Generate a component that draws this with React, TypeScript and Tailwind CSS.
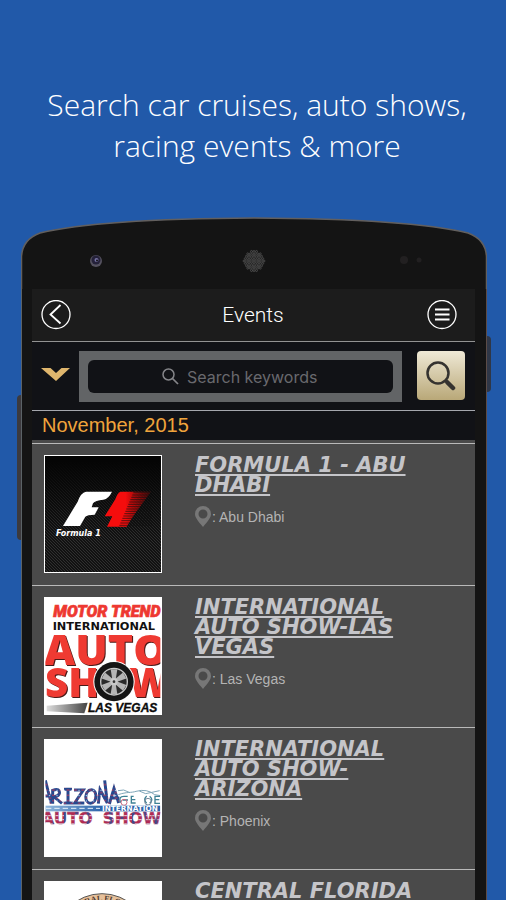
import React from "react";

function FormulaLogo() {
  const speedLines = Array.from({ length: 15 }, (_, i) => 158 + i * 7);
  return (
    <svg viewBox="42 45 354 354" className="block size-full" role="img" aria-label="Formula 1">
      <defs>
        <pattern id="carbon" width="9" height="9" patternUnits="userSpaceOnUse">
          <path d="M0 0l9 9" stroke="#343434" strokeWidth="3" />
        </pattern>
        <linearGradient id="carbonFade" x1="0" y1="0" x2="0" y2="1">
          <stop offset="0.05" stopColor="#050505" />
          <stop offset="0.7" stopColor="#050505" stopOpacity="0.1" />
        </linearGradient>
        <linearGradient id="redFade" x1="0" y1="0" x2="1" y2="0">
          <stop offset="0.45" stopColor="#f50d0d" />
          <stop offset="1" stopColor="#c00" stopOpacity="0.25" />
        </linearGradient>
      </defs>
      <rect x="42" y="45" width="354" height="354" fill="#131313" />
      <rect x="42" y="45" width="354" height="354" fill="url(#carbon)" />
      <rect x="42" y="45" width="354" height="354" fill="url(#carbonFade)" />
      <path d="M168 155H246Q236 176 220 179Q196 181 189 190L185 202H206L194 224Q172 224 166 230L150 258H99L143 185Q152 158 168 155Z" fill="#fff" />
      <path d="M272 155H363L352 170L330 200L310 228L290 260H231L247 229H224L256 178Q262 158 272 155Z" fill="url(#redFade)" />
      {speedLines.map((y, i) => (
        <path key={y} d={`M${310 - i * 3} ${y}H365`} stroke="#111" strokeWidth="2" />
      ))}
      <text x="78" y="287" fontFamily="'DejaVu Sans', sans-serif" fontSize="24" fontWeight="700" fontStyle="italic" fill="#fff">
        Formula 1
      </text>
      <rect x="43.5" y="46.5" width="351" height="351" fill="none" stroke="#fff" strokeWidth="3" />
    </svg>
  );
}

function MotorTrendLogo() {
  const spokes = [0, 60, 120, 180, 240, 300];
  return (
    <svg viewBox="42 36 354 354" className="block size-full" role="img" aria-label="Motor Trend International Auto Show Las Vegas">
      <defs>
        <clipPath id="autoClip">
          <rect x="46" y="40" width="345" height="346" />
        </clipPath>
        <linearGradient id="streak" x1="0" y1="0" x2="1" y2="0">
          <stop offset="0" stopColor="#ddd" />
          <stop offset="1" stopColor="#444" />
        </linearGradient>
      </defs>
      <rect x="42" y="36" width="354" height="354" fill="#fff" />
      <text x="70" y="96" fontFamily="Roboto, sans-serif" fontSize="48" fontWeight="900" fontStyle="italic" fill="#ee3831" stroke="#ee3831" strokeWidth="2">
        MOTOR TREND
      </text>
      <text x="68" y="136" fontFamily="'DejaVu Sans', sans-serif" fontSize="34" fontWeight="700" fill="#111">
        INTERNATIONAL
      </text>
      <g clipPath="url(#autoClip)">
        <g fontFamily="'Open Sans', sans-serif" fontWeight="800" fill="#ef3a32" className="drop-shadow-[3px_3px_0_#4a1a18]">
          <text x="42" y="239" fontSize="129">AUTO</text>
          <text x="45" y="336" fontSize="121">SH</text>
          <text x="295" y="336" fontSize="121">W</text>
        </g>
      </g>
      <circle cx="252" cy="290" r="62" fill="#fff" />
      <circle cx="252" cy="290" r="59" fill="#151515" />
      <circle cx="252" cy="290" r="40" fill="#2a2a2a" stroke="#c8c8c8" strokeWidth="4" />
      {spokes.map((angle) => (
        <path key={angle} d="M247 284L242 253H262L257 284Z" fill="#b5b5b5" transform={`rotate(${angle} 252 290)`} />
      ))}
      <circle cx="252" cy="290" r="11" fill="#c9c9c9" />
      <circle cx="252" cy="290" r="4" fill="#333" />
      <path d="M50 362L173 353L163 385L50 379Z" fill="url(#streak)" />
      <text x="174" y="382" fontFamily="'Liberation Sans', sans-serif" fontSize="36" fontWeight="700" fontStyle="italic" fill="#0c0c0c" stroke="#0c0c0c">
        LAS VEGAS
      </text>
    </svg>
  );
}

function ArizonaLogo() {
  return (
    <svg viewBox="42 42 354 354" className="block size-full" role="img" aria-label="Arizona International Auto Show">
      <defs>
        <clipPath id="arizonaClip">
          <rect x="46" y="150" width="345" height="160" />
        </clipPath>
        <pattern id="flagBlue" width="22" height="16" patternUnits="userSpaceOnUse">
          <rect width="22" height="16" fill="#25498f" />
          <path d="M0 3h9M12 11h8" stroke="#b43a5c" strokeWidth="3" />
          <circle cx="15" cy="4" r="2" fill="#e4ecff" />
        </pattern>
        <pattern id="flagRed" width="34" height="12" patternUnits="userSpaceOnUse">
          <rect width="34" height="12" fill="#b32a52" />
          <path d="M0 8h34" stroke="#eedbe2" strokeWidth="3" />
          <rect width="8" height="12" fill="#3a4d8e" />
        </pattern>
        <linearGradient id="road" x1="0" y1="0" x2="1" y2="0">
          <stop offset="0" stopColor="#8fb6dc" />
          <stop offset="0.5" stopColor="#2c63aa" />
        </linearGradient>
      </defs>
      <rect x="42" y="42" width="354" height="354" fill="#fff" />
      <g clipPath="url(#arizonaClip)">
        <path
          d="M46 166L64 236M46 213L60 212M68 236V196Q91 188 88 206Q84 216 70 214L96 235M102 193H126M114 193V234M101 234H128M132 195H160L134 234H163M184 194C163 195 162 234 181 235C202 235 203 193 184 194M205 236L210 194L232 234L224 166M238 237L252 190L266 234M241 219H268"
          fill="none"
          stroke="url(#flagBlue)"
          strokeWidth="9"
        />
        <path d="M265 209C290 200 304 204 318 199Q351 190 374 209L392 212M300 203L281 195L264 197M328 198L347 206L389 197" fill="none" stroke="#7fa6b8" strokeWidth="3" />
        <path d="M272 233Q264 214 282 214H293M278 225H294M311 214H304V234H317M304 224H316M350 213Q339 224 350 235M359 214Q372 224 359 235M390 214H375V235H390M375 224H388" fill="none" stroke="#3e8194" strokeWidth="4" />
        <circle cx="282" cy="232" r="9" fill="none" stroke="#c66880" strokeWidth="3" />
        <circle cx="354" cy="230" r="10" fill="none" stroke="#7b8a9b" strokeWidth="3" />
        <rect x="46" y="242" width="345" height="17" fill="url(#road)" />
        <path d="M48 250H210" stroke="#e9f2fa" strokeWidth="3" strokeDasharray="16 9" />
        <text x="216" y="258" fontFamily="'DejaVu Sans', sans-serif" fontSize="22" fontWeight="700" fill="#fff">
          INTERNATION
        </text>
        <g fontFamily="'DejaVu Sans', sans-serif" fontSize="50" fontWeight="700" fill="url(#flagRed)" stroke="#8a2f5c" strokeWidth="1">
          <text x="34" y="297">AUTO</text>
          <text x="218" y="297">SHOW</text>
        </g>
      </g>
    </svg>
  );
}

function FloridaLogo() {
  return (
    <svg viewBox="42 467 354 354" className="block size-full" role="img" aria-label="Central Florida">
      <defs>
        <path id="badgeArc" d="M98 645A118 118 0 0 1 334 645" />
      </defs>
      <rect x="42" y="467" width="354" height="354" fill="#fff" />
      <circle cx="216" cy="645" r="140" fill="#e6c09a" stroke="#555" strokeWidth="3" />
      <circle cx="216" cy="645" r="108" fill="#faf3e8" stroke="#777" strokeWidth="2" />
      <text fontFamily="'Liberation Serif', serif" fontSize="24" fontWeight="700" fill="#4d3a31">
        <textPath href="#badgeArc" startOffset="50%" textAnchor="middle">CENTRAL FLORIDA</textPath>
      </text>
    </svg>
  );
}

type EventItem = { title: string; place: string; Logo: () => React.JSX.Element };

const events: EventItem[] = [
  { title: "FORMULA 1 - ABU DHABI", place: "Abu Dhabi", Logo: FormulaLogo },
  { title: "INTERNATIONAL AUTO SHOW-LAS VEGAS", place: "Las Vegas", Logo: MotorTrendLogo },
  { title: "INTERNATIONAL AUTO SHOW-ARIZONA", place: "Phoenix", Logo: ArizonaLogo },
  { title: "CENTRAL FLORIDA", place: "Orlando", Logo: FloridaLogo },
];

function PinIcon() {
  return (
    <svg viewBox="0 0 16 21" className="h-[21px] w-4 shrink-0" aria-hidden="true">
      <path fillRule="evenodd" d="M8 0a8 8 0 0 1 8 8c0 3.500-3 7-8 13C3 15 0 11.500 0 8a8 8 0 0 1 8-8zm0 3.500a4.500 4.500 0 1 0 0 9 4.500 4.500 0 0 0 0-9z" fill="#777" />
    </svg>
  );
}

function EventRow({ title, place, Logo }: EventItem) {
  return (
    <li className="flex gap-[33px] border-t border-[#b9b9b9] px-3 pt-[11px] pb-3">
      <div className="size-[118px] shrink-0">
        <Logo />
      </div>
      <div className="min-w-0 flex-1">
        <h2 className="pr-10 font-['DejaVu_Sans',sans-serif] text-[21px] leading-5 font-bold text-[#c5c5c9] italic">
          <a href="#event" className="underline decoration-2 underline-offset-2">{title}</a>
        </h2>
        <p className="mt-[11px] flex items-center gap-px text-sm text-[#b4b4b4]">
          <PinIcon />
          <span>: {place}</span>
        </p>
      </div>
    </li>
  );
}

function PhoneTop() {
  const dots: number[][] = [];
  for (let row = -4; row <= 4; row++) {
    for (let col = -5; col <= 5; col++) {
      const x = col * 2.5 + (row % 2 ? 1.25 : 0);
      const y = row * 2.4;
      if (x * x + y * y < 108) dots.push([233 + x, 44 + y]);
    }
  }
  return (
    <svg viewBox="0 0 466 72" className="block w-full" aria-hidden="true">
      <path d="M0.500 73V40C1 28 8 20 19 16C60 6 140 1.500 233 1C326 1.500 406 6 447 16C458 20 465 28 465.500 40V73" fill="#141414" stroke="#625f5e" strokeWidth="1.500" />
      <circle cx="75" cy="44" r="6" fill="#55525f" />
      <circle cx="75" cy="43" r="4.500" fill="#242139" />
      <circle cx="75.500" cy="43" r="2" fill="#7773a5" />
      <circle cx="76" cy="43.500" r="1" fill="#111" />
      {dots.map(([x, y]) => (
        <circle key={`${x}-${y}`} cx={x} cy={y} r="0.950" fill="#101010" stroke="#686868" strokeWidth="0.600" />
      ))}
      <circle cx="383" cy="43" r="4" fill="#222021" />
      <circle cx="398" cy="43" r="2.500" fill="#222021" />
    </svg>
  );
}

export default function App() {
  return (
    <main className="h-screen overflow-hidden bg-[#2159a9] font-['Liberation_Sans',Arial,sans-serif]">
      <h1 className="pt-[84px] pl-2 text-center font-['Open_Sans',sans-serif] text-[30px] leading-[41px] font-light text-white">
        Search car cruises, auto shows,
        <br />
        racing events &amp; more
      </h1>

      <div className="relative mt-[51px] mr-[19px] ml-[21px]">
        <div className="absolute top-[178px] -left-1 h-[145px] w-1 rounded-l-sm bg-[#3c3a3e]" />
        <div className="absolute top-[119px] -right-1 h-14 w-1 rounded-r-sm bg-[#2f3747]" />
        <PhoneTop />
        <div className="border-x border-l-[#5b6266] border-r-[#5c4c47] bg-[#141414] pr-[11px] pl-[10px]">
          <header className="flex h-[53px] items-center justify-between border-b border-[#929292] bg-[#1c1c1c] pr-[18px] pl-[9px] text-white">
            <button type="button" aria-label="Back" className="size-[30px]">
              <svg viewBox="0 0 30 30" className="block" fill="none" stroke="currentColor">
                <circle cx="15" cy="14.500" r="14" strokeWidth="1.300" />
                <path d="M19.500 5L9.500 14.500L19.500 23.500" strokeWidth="1.800" />
              </svg>
            </button>
            <h2 className="pl-2 font-['Roboto',sans-serif] text-[21px] leading-7 font-light">Events</h2>
            <button type="button" aria-label="Menu" className="size-[30px]">
              <svg viewBox="0 0 30 30" className="block" fill="none" stroke="currentColor">
                <circle cx="15" cy="14.500" r="14" strokeWidth="1.300" />
                <path d="M8 9.500H22.500M8 14.500H22.500M8 19.500H22.500" strokeWidth="2" />
              </svg>
            </button>
          </header>

          <form className="flex h-[69px] items-start border-b border-[#a5a7ad] bg-[#111216] pt-[9px] pr-[10px] pl-[9px]">
            <button type="button" aria-label="Show filters" className="mt-[17px] mr-[9px]">
              <svg viewBox="0 0 29 13" className="block h-[13px] w-[29px]">
                <path d="M0 0H9.500L15 5L20.500 0H29L15 13Z" fill="#dfb66d" />
              </svg>
            </button>
            <div className="min-w-0 flex-1 bg-[#626466] p-[9px]">
              <label className="flex h-[33px] items-center justify-center gap-2 rounded-md bg-[#111216] text-[#858589]">
                <svg viewBox="0 0 17 17" className="size-[17px]" fill="none" stroke="currentColor" aria-hidden="true">
                  <circle cx="6.500" cy="6.500" r="5.500" strokeWidth="1.500" />
                  <path d="M10.500 10.500L16 16" strokeWidth="1.700" />
                </svg>
                <input
                  type="text"
                  aria-label="Search keywords"
                  placeholder="Search keywords"
                  className="w-[132px] bg-transparent font-['Inter',sans-serif] text-base text-white outline-none placeholder:text-[#69696e]"
                />
              </label>
            </div>
            <button type="submit" aria-label="Search" className="ml-[15px] flex h-[49px] w-12 items-center justify-center rounded bg-linear-to-b from-[#efe9d6] to-[#b9a878]">
              <svg viewBox="0 0 30 30" className="size-[30px]" fill="none" stroke="#353330" aria-hidden="true">
                <circle cx="12" cy="12" r="10.500" strokeWidth="2.500" />
                <path d="M19 19L21.500 21.500" strokeWidth="3" />
                <path d="M21.500 21.500L27 27" strokeWidth="4.500" strokeLinecap="round" />
              </svg>
            </button>
          </form>

          <h2 className="h-[29px] bg-[#111216] pl-[10px] text-xl leading-[29px] text-[#f0a43c]">November, 2015</h2>
          <ul className="bg-[#4a4a4a] pt-[3px]">
            {events.map((event) => (
              <EventRow key={event.title} {...event} />
            ))}
          </ul>
        </div>
      </div>
    </main>
  );
}
